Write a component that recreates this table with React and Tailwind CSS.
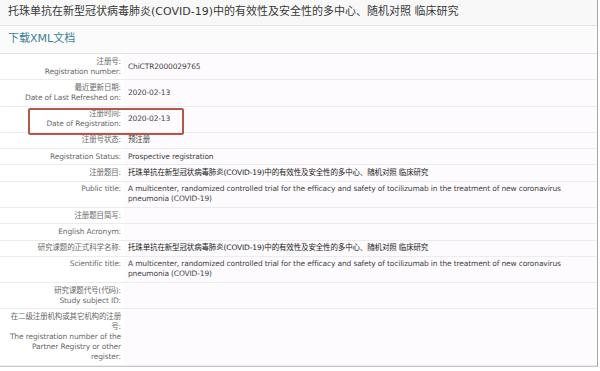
import React from 'react';

const font = { fontFamily: '"DejaVu Sans", "Noto Sans CJK SC", sans-serif' };

const rows = [
  { label: ['注册号:', 'Registration number:'], value: ['ChiCTR2000029765'] },
  { label: ['最近更新日期:', 'Date of Last Refreshed on:'], value: ['2020-02-13'] },
  { label: ['注册时间:', 'Date of Registration:'], value: ['2020-02-13'] },
  { label: ['注册号状态:'], value: ['预注册'] },
  { label: ['Registration Status:'], value: ['Prospective registration'] },
  { label: ['注册题目:'], value: ['托珠单抗在新型冠状病毒肺炎(COVID-19)中的有效性及安全性的多中心、随机对照 临床研究'], dark: true },
  {
    label: ['Public title:'],
    value: [
      'A multicenter, randomized controlled trial for the efficacy and safety of tocilizumab in the treatment of new coronavirus',
      'pneumonia (COVID-19)',
    ],
  },
  { label: ['注册题目简写:'], value: [] },
  { label: ['English Acronym:'], value: [] },
  { label: ['研究课题的正式科学名称:'], value: ['托珠单抗在新型冠状病毒肺炎(COVID-19)中的有效性及安全性的多中心、随机对照 临床研究'], dark: true },
  {
    label: ['Scientific title:'],
    value: [
      'A multicenter, randomized controlled trial for the efficacy and safety of tocilizumab in the treatment of new coronavirus',
      'pneumonia (COVID-19)',
    ],
  },
  { label: ['研究课题代号(代码):', 'Study subject ID:'], value: [] },
  {
    label: ['在二级注册机构或其它机构的注册', '号:', 'The registration number of the', 'Partner Registry or other', 'register:'],
    value: [],
  },
];

const App = () => {
  return (
    <div className="w-[600px] h-[371px] overflow-hidden bg-white text-[#333]" style={font}>
      <div className="w-[598px] border-r border-[#a8a8a8] flex flex-col">
        <div className="h-[26px] bg-[#f8f8f8] border-b border-[#e3e3e3] flex items-center pl-[8px] text-[11px] text-[#383838] whitespace-nowrap">
          托珠单抗在新型冠状病毒肺炎(COVID-19)中的有效性及安全性的多中心、随机对照 临床研究
        </div>
        <div className="h-[28px] bg-[#fbfbfb] border-b border-[#e3e3e3] flex items-center pl-[8px] text-[11px] text-[#3b7f96]">
          下载XML文档
        </div>
        <div className="relative flex flex-col border-b border-[#c8c8c8] text-[7.5px] leading-[10px] tracking-[-0.15px]">
          {rows.map((row, i) => (
            <div key={i} className="flex border-b border-[#ececec] last:border-b-0">
              <div className="w-[124px] shrink-0 bg-white py-[2.65px] pr-[3px] text-right text-[#6a6a6a] whitespace-nowrap">
                {row.label.map((l, j) => (
                  <div key={j}>{l}</div>
                ))}
              </div>
              <div className="flex-1 bg-[#fdfbfd] py-[2.65px] pl-[4px] whitespace-nowrap flex flex-col justify-center">
                {row.value.map((v, j) => (
                  <div key={j} className={row.dark ? 'text-[#222]' : 'text-[#444]'}>
                    {v}
                  </div>
                ))}
              </div>
            </div>
          ))}
          <div className="absolute left-[28px] top-[54px] w-[156px] h-[27px] border-2 border-[#b4574a] rounded-[2px]" />
        </div>
      </div>
    </div>
  );
};

export default App;
